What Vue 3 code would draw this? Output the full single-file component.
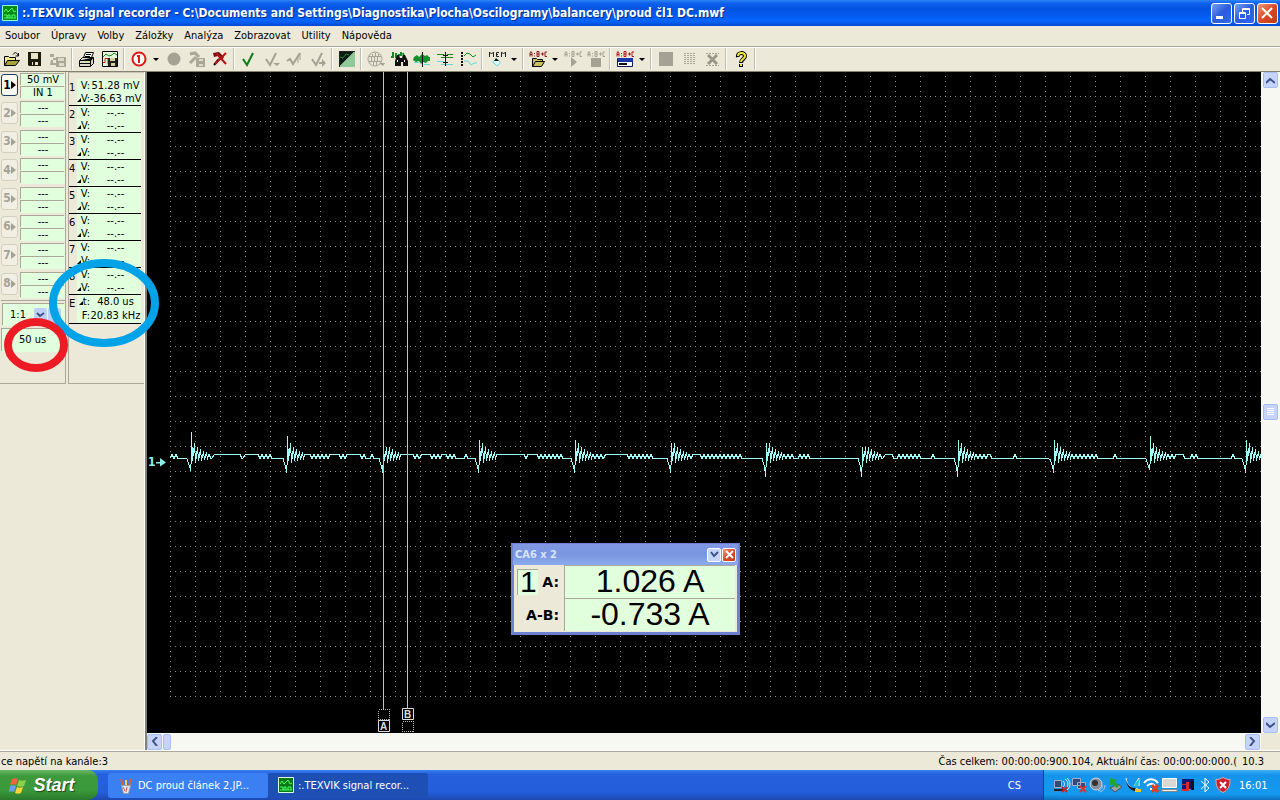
<script setup>
import { ref } from 'vue'

const menus = ['Soubor', 'Úpravy', 'Volby', 'Záložky', 'Analýza', 'Zobrazovat', 'Utility', 'Nápověda']

const disk = (c) => `<path fill="${c}" d="M2 1h13v14H3l-1-1z"/><path fill="#e8e4cc" d="M5 2h7v6H5zM6 11h6v3H6z"/><path fill="${c}" d="M7 11h2v3H7z"/>`
const smallDisk = '<path fill="#aaa698" d="M7 6h10v10H7zM1 3h4v3H1zM4 7h3v2H4zM2 9h2v3h3v2H1z"/><path fill="#dedaca" d="M9 7h6v3H9zM10 12h5v3h-5z"/>'
const check = (c, w) => `<path fill="none" stroke="${c}" stroke-width="${w}" d="M3 8l4 6L13 2"/>`
const abc = (c) => `<path fill="none" stroke="${c}" stroke-width="1" d="M1 5.500V2l1-1.500 1 1.500v3.500M1 3.500h2M5.500 2v1M5.500 4.500v1M8 5.500V.5h2v5zM8 3h2M12 3h3M13.500 1.500v3M18 1h-2v4.500h2"/>`
const folder = (c) => `<path fill="${c}" stroke="#000" d="M3.500 15.500v-8h4l1 1h5v2M3.500 15.500l3-5h9l-3 5z"/>`

const icons = {
  open: '<path fill="#efea90" stroke="#000" d="M1.500 14.500v-9h4l1 1h6v3"/><path fill="#a8a23c" stroke="#000" d="M1.500 14.500l3-5h12l-4 5z"/><path fill="none" stroke="#000" d="M10 3.500c2-3 4-2 5 1M12.500 5h3V2"/>',
  save: disk('#1c1c0c'),
  saveOff: smallDisk,
  print: '<path fill="#fff" stroke="#000" d="M5.500 6.500l2-5h8l-2 5"/><path fill="#dcd9cc" stroke="#000" d="M1.500 9.500l3-3h11v6l-3 3h-11z"/><path stroke="#000" d="M8 3.500h5M7 5.500h5M2 9.500h11l2-3M2 12.500h11M12.500 10v5"/><path fill="#ee4" d="M9 10h2v1H9z"/>',
  image: '<path fill="#e4f7da" stroke="#000" d="M1.500.5h15v15h-15z"/><path fill="none" stroke="#168a1c" d="M2 6l3-3 3 2 3-1 2-2 3 2"/><path fill="none" stroke="#c22" d="M2 11.500h2V7.500h3v6"/><path fill="#222" d="M7 7h9v8H7z"/><path fill="#d4cf9c" d="M9 7h5v3H9zM10 12h4v3h-4z"/>',
  record: '<circle cx="9" cy="8" r="6.500" fill="#fff" stroke="#dc1818" stroke-width="2"/><path fill="#dc1818" d="M7 4h3v8H8V6H7z"/>',
  circleOff: '<circle cx="9" cy="8" r="6.500" fill="#a5a194"/>',
  writeOff: '<path fill="none" stroke="#aaa698" stroke-width="3" d="M2 3l5-1 4 4M2 12l6-6"/><path fill="#aaa698" d="M8 7h9v9H8z"/><path fill="#dedaca" d="M11 8h4v2h-4zM11 13h4v2h-4z"/>',
  cancel: '<path fill="#701010" d="M2 2l6-1 5 5-2 3-4-4-4 1z"/><path stroke="#000" stroke-width="2" d="M8 8l-5 6"/><path stroke="#b41414" stroke-width="2" d="M5 2l10 11M15 2L4 13"/>',
  check: check('#0c7a18', 2),
  checkDown: check('#a5a194', 2) + '<path fill="#a5a194" d="M10 12h7l-3 3z"/>',
  checkUp: '<path fill="none" stroke="#a5a194" stroke-width="2" d="M1 10l3-2 3 5L14 2"/><path stroke="#a5a194" d="M12 4v8M14 2v7"/>',
  checkNext: check('#a5a194', 2) + '<path fill="#a5a194" d="M10 11h3V8l4 4-4 4v-3h-3z"/>',
  contrast: '<path fill="#0a1d10" d="M1 0h16L1 16z"/><path fill="#8fc99a" d="M17 0v16H1z"/><path fill="none" stroke="#2f8344" d="M2 6l3 1 3-4 3 1"/><path stroke="#222" d="M1 .5h16M1.500 0v16"/>',
  globeOff: '<circle cx="8" cy="8" r="7" fill="#e9e6d8" stroke="#a5a194"/><path stroke="#a5a194" d="M2 5.500h12M2 10.500h12M5.500 3v3M8.500 2v3M11.500 3v3M4.500 6v4M7.500 6v4M10.500 6v4M6.500 11v3M9.500 11v3"/><path fill="#a5a194" d="M12 12h6l-2 3z"/>',
  find: '<path fill="none" stroke="#18862c" stroke-width="2" d="M1 6h2V1M6 2v5M8 4h3V1M13 2l1 4"/><path fill="#111" d="M6 7l1-3h2l1 3h2l1-3h2l3 6v5h-5v-4h-2v4H5v-5z"/><path fill="#fff" d="M7 9h1v2H7zM14 9h1v2h-1z"/>',
  wave: '<path fill="#13912c" d="M1 6l3-2 2 2 3-3 3 2 2-1 2 2h1v4h-2l-2 2-3-1-2 2-2-3-3 1-3-2z"/><path stroke="#65d9d8" d="M1 11.500h5M11 13.500h6"/><path stroke="#111" d="M9.500 1v15"/>',
  cursors: '<path stroke="#168a1c" d="M1 3.500h7M11 3.500h6M5 6.500h12"/><path stroke="#65d9d8" d="M1 10.500h7M5 13.500h12"/><path stroke="#111" d="M9.500 1v14M7 4.500h5M7 11.500h5"/>',
  cursors2: '<path stroke="#111" stroke-width="2" stroke-dasharray="2 1" d="M3 1v14"/><path fill="none" stroke="#168a1c" d="M5 5l3-3 3 1 3 3 3-2"/><path fill="none" stroke="#65d9d8" d="M5 10h4l3 4 3-2h3"/>',
  mem: '<path fill="none" stroke="#222" d="M1.500 6V1l2 2 2-2v5M11 1.500H8.500v4H11M8 3.500h2M13.500 6V1l2 2 2-2v5"/><path fill="#dff" stroke="#65d9d8" d="M4.500 11l4-3 4 3-3 4z"/><path fill="#111" d="M6 10h5l-3-3z"/>',
  abcOpen: abc('#8b1a1a') + folder('#c8c060'),
  abcPlay: abc('#a5a194') + '<path fill="#a5a194" d="M7 6l6 5-6 5z"/>',
  abcStop: abc('#a5a194') + '<path fill="#a5a194" d="M4 7h10v9H4z"/>',
  abcPanel: abc('#b21717') + '<path fill="#fff" stroke="#101860" stroke-width="1" d="M1.500 7.500h15v8h-15z"/><path fill="#1838a8" d="M2 7h15v4H2z"/><path stroke="#111" stroke-width="2" d="M3 13h8"/>',
  block: '<path fill="#a5a194" d="M2 1h14v14H2z"/>',
  dots: '<path fill="none" stroke="#a9a596" stroke-dasharray="2 1" d="M4 2.500h11M4 4.500h11M4 6.500h11M4 8.500h11M4 10.500h11M4 12.500h11"/>',
  blockX: '<path stroke="#a5a194" stroke-dasharray="2 1" d="M3 2.500h13M3 14.500h13"/><path stroke="#9a968a" stroke-width="3" d="M5 4l9 9M14 4l-9 9"/>',
  help: '<path fill="none" stroke="#000" stroke-width="4" d="M6 6c-1-5 7-5 7-1 0 3-4 3-4 7M9 13v3"/><path fill="none" stroke="#f4ea30" stroke-width="2" d="M6 5c0-4 7-4 7 0 0 3-4 3-4 6M9 13v2"/>',
}

const toolbar = [
  'open', 'save', 'saveOff', '|', 'print', 'image', '|', 'record', '>', 'circleOff', 'writeOff', 'cancel', '|',
  'check', 'checkDown', 'checkUp', 'checkNext', '|', 'contrast', '|', 'globeOff', 'find', 'wave', 'cursors',
  'cursors2', '|', 'mem', '>', '|', 'abcOpen', '>', 'abcPlay', 'abcStop', '|', 'abcPanel', '>', '|',
  'block', 'dots', 'blockX', '|', 'help', '|',
]

const channels = [1, 2, 3, 4, 5, 6, 7, 8].map((n) => ({
  n,
  range: n === 1 ? '50 mV' : '---',
  input: n === 1 ? 'IN 1' : '---',
}))
const readouts = [1, 2, 3, 4, 5, 6, 7, 8].map((n) => ({
  n,
  v: n === 1 ? '51.28 mV' : '--.--',
  dv: n === 1 ? '-36.63 mV' : '--.--',
}))
const ratio = ref('1:1')

// Trace description: l = low level, h = high level, z = ripple, b = spike [x, trough, peak]
const HIGH = 382
const LOW = 386
const segments = [
  ['z', 33], ['l', 39], ['b', 44, 398, 360], ['z', 66], ['h', 91], ['z', 97], ['h', 109], ['z', 125], ['l', 136],
  ['b', 140, 400, 364], ['z', 154], ['h', 161], ['z', 181], ['h', 190], ['z', 198], ['h', 211], ['z', 218], ['l', 223], ['z', 227], ['l', 232],
  ['b', 236, 400, 375], ['z', 252], ['h', 264], ['z', 273], ['h', 281], ['z', 293], ['h', 297], ['z', 311], ['l', 317], ['z', 321], ['l', 328],
  ['b', 332, 400, 368], ['z', 346], ['h', 375], ['z', 379], ['h', 388], ['z', 415], ['l', 424],
  ['b', 428, 400, 368], ['z', 457], ['h', 478], ['z', 505], ['l', 520],
  ['b', 524, 400, 371], ['z', 543], ['h', 551], ['z', 596], ['l', 615],
  ['b', 619, 404, 371], ['z', 647], ['l', 651], ['z', 664], ['l', 711],
  ['b', 715, 404, 375], ['z', 737], ['h', 745], ['l', 750], ['z', 773], ['l', 784], ['z', 790], ['l', 807],
  ['b', 811, 404, 368], ['z', 838], ['h', 841], ['z', 847], ['l', 866], ['z', 870], ['l', 900],
  ['b', 907, 400, 368], ['z', 951], ['l', 966], ['z', 971], ['l', 998],
  ['b', 1003, 397, 364], ['z', 1026], ['h', 1036], ['l', 1043], ['z', 1051], ['l', 1084], ['z', 1088], ['l', 1094],
  ['b', 1099, 400, 368], ['z', 1400],
]
const ringing = [[1, 388], [3, 371], [4, 390], [6, 375], [7, 388], [9, 377], [10, 388], [12, 379], [13, 387], [15, 380], [16, 387]]

function buildTrace() {
  let x = 23
  const pts = [[x, LOW]]
  for (const [kind, end, trough, peak] of segments) {
    if (kind === 'b') {
      pts.push([end - 4, LOW + 1], [end - 3, LOW + 6], [end - 2, LOW + 7], [end - 1, trough], [end, LOW], [end, peak])
      for (const [dx, y] of ringing) pts.push([end + dx, Math.max(y, peak)])
      x = end + 16
      continue
    }
    if (kind === 'z') {
      for (; x + 4 <= end + 1; x += 4) pts.push([x + 1, HIGH], [x + 2, HIGH], [x + 3, LOW], [x + 4, LOW])
    } else if (end > x) {
      const y = kind === 'h' ? HIGH : LOW
      pts.push([x + 1, y], [end, y])
    }
    x = Math.max(x, end)
  }
  return pts.map((p) => p.join(',')).join(' ')
}
const trace = buildTrace()

const tray = {
  net: '<path fill="#334a7c" stroke="#aac" d="M1.500 3.500h7v7h-7z"/><path fill="#222" d="M1 12h9v2H1z"/><path fill="none" stroke="#dfe8f8" d="M10 4c2 2 2 4 0 6M12 2c4 3 4 7 0 10M14 1c4 4 4 9 0 12"/><path stroke="#d02020" stroke-width="2" d="M9 10l5 5M14 10l-5 5"/>',
  lan: '<path fill="#334a7c" stroke="#aac" d="M1.500 1.500h8v7h-8zM6.500 5.500h8v6h-8z"/><path stroke="#e03030" stroke-width="2" d="M9 9l6 6M15 9l-6 6"/>',
  vol: '<circle cx="7" cy="7" r="6" fill="#8a8f99" stroke="#d0d4dc"/><circle cx="6" cy="6" r="3" fill="#333"/><path fill="none" stroke="#b5c6e4" stroke-width="1" d="M13 8c1 3-1 5-4 6M16 8c0 4-2 6-5 7"/>',
  usb: '<path fill="#9aa4a8" stroke="#46525c" d="M3 11l8-4 4 3-7 5z"/><path fill="#23a52c" d="M3 1l7 2-2 2 4 4-2 2-5-4-2 2z"/>',
  syn: '<path fill="none" stroke="#fff" stroke-width="1" d="M1 1c1 7 4 11 12 11M9 9l5-8v8"/><path fill="#1a1a1a" d="M1 3c2 6 5 8 9 8l4 3c-7 1-12-3-13-11z"/><path fill="#1cc3d4" d="M9 8l6-7-3 10z"/><path fill="#f2c71b" d="M10 12h6v3h-6z"/>',
  wifi: '<path fill="none" stroke="#fff" stroke-width="2" d="M1 6c4-5 10-5 14 0M4 9c3-3 6-3 8 0M7 12h2"/><path stroke="#df4020" stroke-width="3" d="M9 8l6 7M15 8l-6 7"/>',
  screen: '<path fill="#d8d8d4" stroke="#fff" d="M1.500 1.500h14v9h-14z"/><path fill="#f5f5f0" stroke="#888" d="M1 12.500h15v2H1z"/>',
  ati: '<path fill="#0c1770" d="M3 2h12v10H3z"/><path fill="#e02828" d="M3 12h5v2H3zM7 5h3v9H7zM3 7h4v1H3z"/><path fill="#111" d="M12 4h3v9h-3z"/>',
  bt: '<path fill="none" stroke="#fff" d="M4 4l8 7-4 4V1l4 4-8 7"/>',
  shield: '<path fill="#c8202c" stroke="#e8a8a8" d="M8 .5c2 1 4 2 7 2 0 6-1 10-7 13-6-3-7-7-7-13 3 0 5-1 7-2z"/><path stroke="#fff" stroke-width="2" d="M5 5l6 6M11 5l-6 6"/>',
}
</script>

<template>
  <div class="app">
    <header class="title">
      <svg class="appicon" width="16" height="16" viewBox="0 0 16 16"><path fill="#0a8a18" stroke="#9fc" d="M.5.5h15v15H.5z"/><path fill="none" stroke="#4f6" d="M2 7l2-3 2 3 2-2 2-2 2 4 2-1M2 10h3v3M6 13v-3h2v3M10 13v-3h3v3M2 13h12"/></svg>
      <h1>:.TEXVIK  signal recorder - C:\Documents and Settings\Diagnostika\Plocha\Oscilogramy\balancery\proud čl1 DC.mwf</h1>
      <div class="winbtns">
        <button aria-label="Minimalizovat"><svg width="21" height="21"><path fill="#fff" d="M5 13h7v3H5z"/></svg></button>
        <button aria-label="Obnovit"><svg width="21" height="21"><path fill="none" stroke="#fff" d="M8.500 9V5.500h7v6H13M8 6.500h8M5.500 9.500h6v6h-6zM5 10.500h7"/></svg></button>
        <button class="red" aria-label="Zavřít"><svg width="21" height="21"><path stroke="#fff" stroke-width="2" d="M5 5l10 10M15 5L5 15"/></svg></button>
      </div>
    </header>

    <nav class="menu"><button v-for="m in menus" :key="m">{{ m }}</button></nav>

    <div class="toolbar">
      <template v-for="(t, i) in toolbar" :key="i">
        <span v-if="t === '|'" class="sep"></span>
        <button v-else-if="t === '>'" class="drop" aria-label="Další"><svg width="6" height="3"><path d="M0 0h6L3 3z"/></svg></button>
        <button v-else class="tool" :aria-label="t"><svg width="18" height="16" viewBox="0 0 18 16" v-html="icons[t]"></svg></button>
      </template>
    </div>

    <main class="main">
      <aside class="side">
        <section class="inputs">
          <div class="channels">
            <div v-for="c in channels" :key="c.n" class="channel">
              <button :class="{ on: c.n === 1 }">{{ c.n }}<svg width="5" height="8"><path fill="currentColor" d="M0 0l5 4-5 4z"/></svg></button>
              <div class="cells"><span>{{ c.range }}</span><span>{{ c.input }}</span></div>
            </div>
          </div>
          <div class="ratio">
            <select v-model="ratio" aria-label="Poměr"><option>1:1</option></select>
            <span class="mini"><svg width="9" height="7"><path fill="none" stroke="#3d5388" stroke-width="2" d="M1 1l3 3 4-3"/></svg></span>
            <button class="mini" aria-label="Nastavit"></button>
          </div>
          <div class="timebase">50 us</div>
        </section>
        <section class="values">
          <div v-for="r in readouts" :key="r.n" class="readout">
            <b>{{ r.n }}</b>
            <span class="k">V:</span><span class="v">{{ r.v }}</span>
            <span class="k"><i></i>V:</span><span class="v">{{ r.dv }}</span>
          </div>
          <div class="readout last">
            <b>E</b>
            <span class="k"><i></i>t:</span><span class="v">48.0 us</span>
            <span class="k">F:</span><span class="v">20.83 kHz</span>
          </div>
        </section>
        <svg class="marks" width="165" height="120">
          <ellipse cx="104" cy="46" rx="51" ry="40" stroke="#00a2e8" stroke-width="8"/>
          <ellipse cx="36" cy="88" rx="28" ry="23" stroke="#ed1c24" stroke-width="8"/>
        </svg>
      </aside>

      <section class="scope">
        <div class="plot">
          <svg class="canvas" width="100%" height="100%">
            <defs>
              <pattern id="grid" x="23" y="24" width="25" height="25" patternUnits="userSpaceOnUse">
                <path fill="#8c8c8c" d="M0 0h1v1H0zM5 0h1v1H5zM10 0h1v1h-1zM15 0h1v1h-1zM20 0h1v1h-1zM0 5h1v1H0zM0 10h1v1H0zM0 15h1v1H0zM0 20h1v1H0z"/>
              </pattern>
            </defs>
            <rect x="23" y="2" width="100%" height="623" fill="url(#grid)" shape-rendering="crispEdges"/>
            <polyline :points="trace" transform="translate(.5 .5)" fill="none" stroke="#9cfff8" stroke-linejoin="bevel" shape-rendering="crispEdges"/>
            <path stroke="#c4c4bc" d="M236.500 0v637M260.500 0v637" shape-rendering="crispEdges"/>
            <path fill="none" stroke="#bbb" stroke-dasharray="1 1" shape-rendering="crispEdges" d="M231.500 637.500h11v10h-11zM255.500 649.500h11v10h-11z"/>
            <path fill="none" stroke="#ddd" d="M231.500 648.500h11v11h-11zM255.500 636.500h11v11h-11z"/>
            <text x="233" y="658" class="tag">A</text><text x="257" y="646" class="tag">B</text>
            <text x="1" y="394" class="origin">1</text>
            <path fill="#8ff0ea" d="M9 390h4v-4l6 4.500-6 4v-3H9z"/>
          </svg>
          <div class="dialog">
            <header><strong>CA6 x 2</strong>
              <button aria-label="Sbalit"><svg width="9" height="7"><path fill="none" stroke="#3d5388" stroke-width="2" d="M1 1l3 4 4-4"/></svg></button>
              <button class="red" aria-label="Zavřít"><svg width="9" height="9"><path stroke="#fff" stroke-width="2" d="M1 1l7 7M8 1L1 8"/></svg></button>
            </header>
            <div class="body">
              <div class="lab"><em>1</em>A:</div><output>1.026 A</output>
              <div class="lab">A-B:</div><output>-0.733 A</output>
            </div>
          </div>
        </div>
        <div class="vbar">
          <button aria-label="Nahoru"><svg width="9" height="7"><path d="M0 6l4-4 5 4"/></svg></button>
          <button class="grip" aria-label="Posuvník"><svg width="9" height="8"><path class="lines" d="M1 .5h7M1 2.500h7M1 4.500h7M1 6.500h7"/></svg></button>
          <button aria-label="Dolů"><svg width="9" height="7"><path d="M0 1l4 4 5-4"/></svg></button>
        </div>
        <div class="hbar">
          <button aria-label="Vlevo"><svg width="7" height="9"><path d="M6 0L2 4l4 5"/></svg></button>
          <button class="grip" aria-label="Posuvník vodorovný"></button>
          <button class="end" aria-label="Vpravo"><svg width="7" height="9"><path d="M1 0l4 4-4 5"/></svg></button>
        </div>
      </section>
    </main>

    <footer class="status">
      <span class="msg">ce napětí na kanále:3</span>
      <span class="time">Čas celkem: 00:00:00:900.104, Aktuální čas: 00:00:00:000.(</span>
      <span class="ver">10.3</span>
    </footer>

    <div class="taskbar">
      <button class="start"><svg width="18" height="17" viewBox="0 0 18 17"><path fill="#f0653a" d="M3 2c2-1 4-1 6 0L7 8C5 7 3 7 1 8z"/><path fill="#8ed04a" d="M10 3c2 1 4 1 7 0l-2 6c-2 1-4 1-7 0z"/><path fill="#6a9df0" d="M1 9c2-1 4-1 6 0l-2 6c-2-1-3-1-5 0z"/><path fill="#fbd237" d="M8 10c2 1 4 1 6 0l-2 6c-2 1-4 1-6 0z"/></svg>Start</button>
      <button class="task"><svg width="16" height="17" viewBox="0 0 16 17"><path stroke="#d9622b" stroke-width="2" d="M5 9L3 2M11 9l2-7"/><path stroke="#f3cf52" stroke-width="2" d="M8 9V3"/><path fill="#e4e6ec" stroke="#99a" d="M3.500 8.500h9l-2 8h-5z"/><path stroke="#c55" d="M5 10l2 4M9 10l-1 5"/></svg>DC proud článek 2.JP...</button>
      <button class="task on"><svg width="16" height="16" viewBox="0 0 16 16"><path fill="#0a7a14" stroke="#dfd" d="M.5.5h15v15H.5z"/><path fill="none" stroke="#4f6" d="M2 7l2-3 2 3 2-2 2-2 2 4 2-1M2 10h3v3M6 13v-3h2v3M10 13v-3h3v3M2 13h12"/></svg>:.TEXVIK  signal recor...</button>
      <span class="lang">CS</span>
      <div class="tray">
        <svg v-for="(m, k) in tray" :key="k" width="18" height="16" viewBox="0 0 18 16" v-html="m"></svg>
        <time>16:01</time>
      </div>
    </div>
  </div>
</template>

<style>
body { margin: 0; overflow: hidden; }
</style>

<style scoped>
.app { display: flex; flex-direction: column; height: 100vh; background: #ece9d8; font: 11px/13px "DejaVu Sans Condensed", "DejaVu Sans", sans-serif; color: #000; }
.app * { box-sizing: border-box; }
button { font: inherit; color: inherit; border: 0; padding: 0; margin: 0; background: none; display: flex; align-items: center; justify-content: center; flex: none; }
svg { flex: none; display: block; }

.title { display: flex; align-items: center; gap: 4px; height: 26px; flex: none; padding: 0 2px; background: linear-gradient(#2f86f8 0, #0f62ee 3px, #0454e0 8px, #0358ec 14px, #0566fe 21px, #0548cf 26px); color: #fff; }
.title h1 { flex: 1; min-width: 0; overflow: hidden; margin: 0; font-size: 12px; line-height: 18px; font-weight: bold; white-space: pre; text-shadow: 1px 1px 0 #0a2c88; }
.winbtns { display: flex; gap: 2px; }
.winbtns button { width: 21px; height: 21px; border: 1px solid #fff; border-radius: 3px; background: linear-gradient(135deg, #7ba0f2, #2a5cdd 50%, #2b6af2); overflow: hidden; }
.winbtns .red, .dialog header .red { background: linear-gradient(135deg, #ee9a80, #da4a26 50%, #c33a18); }

.menu { display: flex; height: 21px; flex: none; border-bottom: 1px solid #aca899; box-shadow: 0 1px 0 #fff; }
.menu button { padding: 0 6px 0 5px; height: 18px; }

.toolbar { display: flex; align-items: center; height: 25px; flex: none; border-bottom: 1px solid #84816f; }
.tool { width: 23px; height: 22px; }
.drop { width: 12px; height: 22px; }
.sep { width: 6px; height: 22px; flex: none; background: linear-gradient(90deg, transparent 2px, #c0bcab 2px, #c0bcab 3px, #fff 3px, #fff 4px, transparent 4px); }

.main { flex: 1; min-height: 0; display: flex; border-bottom: 1px solid #fff; }
.side { width: 145px; flex: none; position: relative; z-index: 2; display: flex; align-items: flex-start; border-right: 1px solid #fff; }
.inputs { width: 66px; flex: none; height: 312px; border-right: 1px solid #aca899; border-bottom: 1px solid #aca899; padding: 1px 0 0 1px; }
.channels { display: grid; grid-auto-rows: 1fr; height: 228px; border-bottom: 1px solid #aca899; }
.channel { display: flex; gap: 3px; align-items: flex-start; }
.channel button { width: 17px; height: 22px; margin-top: 1px; border: 1px solid #d4d0c0; border-radius: 3px; background: #f1efe4; color: #a6a291; font-size: 12px; font-weight: bold; }
.channel .on { border-color: #1d3c66; color: #000; background: #f8f7f0; }
.cells { flex: 1; display: grid; gap: 1px; padding-top: 1px; }
.cells span { height: 12px; line-height: 12px; text-align: center; background: #e1ffdd; box-shadow: -1px -1px 0 #aca899; }
.ratio { display: flex; align-items: center; height: 22px; margin: 3px 0 0 2px; background: #e1ffdd; box-shadow: -1px -1px 0 #aca899; }
.ratio select { appearance: none; border: 0; background: none; font: inherit; line-height: 18px; width: 31px; padding: 0 0 0 7px; color: #000; }
.mini { width: 13px; height: 15px; margin-right: 1px; display: flex; align-items: center; justify-content: center; background: #bfd0f8; border-radius: 2px; }
.timebase { height: 23px; margin: 3px 0 0 1px; padding-left: 17px; line-height: 22px; background: #e1ffdd; box-shadow: -1px -1px 0 #aca899; }
.values { flex: 1; min-width: 0; margin-left: 2px; height: 312px; padding: 6px 3px 0 0; border: 1px solid #aca899; border-top-color: #c8c4b4; border-right: 0; }
.readout { display: grid; grid-template-columns: 8px 13px 1fr; grid-auto-rows: 13px; height: 27px; border-bottom: 1px solid #000; background: #e1ffdd; line-height: 13px; }
.readout.last { height: 29px; grid-auto-rows: 14px; }
.readout b { grid-row: span 2; font-weight: normal; background: #ece9d8; line-height: 17px; }
.readout .k { text-align: right; white-space: nowrap; }
.readout .k i { display: inline-block; border-left: 4px solid transparent; border-bottom: 4px solid #000; }
.readout .v { text-align: center; white-space: nowrap; min-width: 0; }
.marks { position: absolute; left: 0; top: 185px; fill: none; pointer-events: none; }

.scope { flex: 1; min-width: 0; display: grid; grid-template: 1fr 17px / 1fr 19px; border-left: 2px solid #84816f; }
.plot { position: relative; min-height: 0; min-width: 0; background: #000; overflow: hidden; }
.canvas { position: absolute; inset: 0; }
.tag { font: bold 10px "Liberation Sans", sans-serif; fill: #ddd; }
.origin { font: bold 12px "DejaVu Sans Condensed", sans-serif; fill: #8ff0ea; }
.vbar, .hbar { display: flex; background: #f8f8f2; }
.vbar { flex-direction: column; align-items: center; justify-content: space-between; }
.vbar button, .hbar button { width: 15px; height: 16px; border-radius: 2px; background: #c6d4fa; border: 1px solid #a8bdf0; }
.vbar .grip { margin-top: 18px; }
.vbar path, .hbar path { fill: none; stroke: #3d5388; stroke-width: 2; }
.vbar .lines { stroke: #fff; stroke-width: 1; }
.hbar { align-items: center; gap: 1px; }
.hbar .grip { width: 8px; }
.hbar .end { margin-left: auto; margin-right: 1px; }

.dialog { position: absolute; left: 364px; top: 471px; width: 229px; border: 3px solid #6d80d2; border-top-width: 1px; background: #ece9d8; }
.dialog header { display: flex; align-items: center; gap: 1px; height: 21px; background: linear-gradient(#8298e4, #7a96e0 50%, #8cabee); margin-inline: -1px; padding: 0 2px; color: #d6e4fc; }
.dialog strong { flex: 1; }
.dialog header button { width: 14px; height: 14px; background: #c6d4fa; border: 1px solid #fff; border-radius: 2px; }
.body { display: grid; grid-template-columns: 49px 1fr; grid-auto-rows: 33px; padding: 0 2px 1px 1px; }
.lab { display: flex; align-items: center; justify-content: flex-end; gap: 4px; padding-right: 5px; font: bold 14px/18px "DejaVu Sans", sans-serif; }
.lab em { font: 30px/23px "Liberation Sans", sans-serif; width: 21px; height: 26px; text-align: center; background: #e1ffdd; border: 1px solid #aca899; border-width: 1px 0 0 1px; }
.body output { font: 32px/30px "Liberation Sans", sans-serif; text-align: center; background: #e1ffdd; border: 1px solid #aca899; border-width: 1px 0 0 1px; }

.status { height: 19px; flex: none; display: flex; align-items: center; border-top: 1px solid #aca899; white-space: nowrap; }
.msg { flex: 1; padding-left: 1px; }
.ver { width: 43px; padding-left: 5px; }

.taskbar { height: 30px; flex: none; display: flex; align-items: center; color: #fff; background: linear-gradient(#3a80f0 0, #2560dd 4px, #245edb 22px, #1c49b0 30px); }
.start { width: 98px; height: 30px; gap: 6px; padding-right: 14px; margin-right: 10px; border-radius: 0 10px 10px 0; background: linear-gradient(#6fb766 0, #3c9a3c 6px, #3a9a3a 20px, #2a7a2c 30px); font: italic bold 18px/22px "Liberation Sans", sans-serif; text-shadow: 1px 1px 1px #1b4a1b; }
.task { width: 160px; height: 25px; justify-content: flex-start; gap: 4px; padding-left: 10px; border-radius: 3px; background: #3b80f2; white-space: pre; }
.task.on { background: #1d4fb5; }
.lang { margin-left: auto; padding-right: 22px; }
.tray { display: flex; align-items: center; height: 30px; width: 237px; padding-left: 9px; border-left: 1px solid #0d3f9c; background: linear-gradient(#3fb0f6 0, #1593ea 5px, #149aee 24px, #0f6fc0 30px); }
.tray time { margin-left: 6px; }
</style>
